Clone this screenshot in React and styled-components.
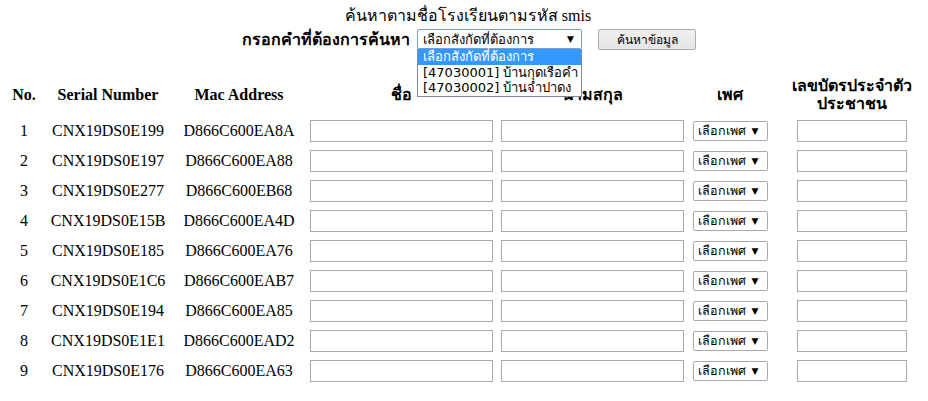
import React from 'react';
import styled, { createGlobalStyle } from 'styled-components';

const GlobalStyle = createGlobalStyle`
  body {
    margin: 0;
    background: #ffffff;
    color: #000000;
    font-family: "Liberation Serif", "Times New Roman", serif;
    overflow: hidden;
  }
`;

const Page = styled.div`
  width: 928px;
  padding-top: 6px;
`;

const Title = styled.div`
  text-align: center;
  font-size: 16px;
  line-height: 20px;
  padding-left: 8px;
`;

const SearchRow = styled.div`
  display: flex;
  align-items: center;
  justify-content: center;
  height: 24px;
  margin-top: 1px;
  padding-left: 10px;
`;

const SearchLabel = styled.span`
  font-weight: bold;
  font-size: 16px;
  margin-right: 7px;
`;

const SelectWrap = styled.div`
  position: relative;
  margin-right: 16px;
`;

const SelectBox = styled.div`
  box-sizing: border-box;
  width: ${p => p.$width}px;
  height: ${p => p.$height}px;
  border: 1px solid ${p => (p.$focused ? '#7a9ccf' : '#a9a9a9')};
  border-radius: 2px;
  background: #fff;
  display: flex;
  align-items: center;
  justify-content: space-between;
  padding: 0 7px 0 5px;
  font-family: Tahoma, "DejaVu Sans", "Noto Sans", sans-serif;
  font-size: 13px;
  color: #000;
`;

const Arrow = styled.span`
  font-size: 9px;
  line-height: 1;
`;

const OptionList = styled.div`
  position: absolute;
  left: 0;
  top: 20px;
  width: 165px;
  box-sizing: border-box;
  border: 1px solid #7f8a9a;
  border-top: none;
  background: #fff;
  font-family: Tahoma, "DejaVu Sans", "Noto Sans", sans-serif;
  font-size: 13px;
  z-index: 2;
`;

const Option = styled.div`
  height: 15.5px;
  line-height: 15.5px;
  padding-left: 5px;
  white-space: nowrap;
  background: ${p => (p.$active ? '#3399ff' : 'transparent')};
  color: ${p => (p.$active ? '#ffffff' : '#000000')};
`;

const Button = styled.button`
  box-sizing: border-box;
  width: 98px;
  height: 21px;
  border: 1px solid #acacac;
  border-radius: 2px;
  background: linear-gradient(#f0f0f0, #e5e5e5);
  font-family: Tahoma, "DejaVu Sans", "Noto Sans", sans-serif;
  font-size: 12px;
  color: #000;
  padding: 0;
`;

const Table = styled.table`
  margin: 23px 0 0 4px;
  border-collapse: collapse;
  border-spacing: 0;
  table-layout: fixed;
  width: 908px;
`;

const Th = styled.th`
  width: ${p => p.$w}px;
  height: 42px;
  padding: 0 0 0 ${p => p.$pl || 0}px;
  font-size: 16px;
  line-height: 18px;
  font-weight: bold;
  text-align: center;
  vertical-align: middle;
  white-space: nowrap;
`;

const Td = styled.td`
  height: 30px;
  padding: 0 0 0 ${p => p.$pl || 0}px;
  font-size: 16px;
  text-align: center;
  vertical-align: middle;
`;

const TextInput = styled.input`
  box-sizing: border-box;
  width: ${p => p.$width}px;
  height: 22px;
  border: 1px solid #a9a9a9;
  padding: 0 2px;
  background: #fff;
  display: block;
  margin: 0 auto;
`;

const GenderSelect = styled(SelectBox)`
  margin: 0 auto;
  padding: 0 8px 0 4px;
  font-size: 12.5px;
`;

const rows = [
  ['CNX19DS0E199', 'D866C600EA8A'],
  ['CNX19DS0E197', 'D866C600EA88'],
  ['CNX19DS0E277', 'D866C600EB68'],
  ['CNX19DS0E15B', 'D866C600EA4D'],
  ['CNX19DS0E185', 'D866C600EA76'],
  ['CNX19DS0E1C6', 'D866C600EAB7'],
  ['CNX19DS0E194', 'D866C600EA85'],
  ['CNX19DS0E1E1', 'D866C600EAD2'],
  ['CNX19DS0E176', 'D866C600EA63'],
];

export default function App() {
  return (
    <Page>
      <GlobalStyle />
      <Title>ค้นหาตามชื่อโรงเรียนตามรหัส smis</Title>
      <SearchRow>
        <SearchLabel>กรอกคำที่ต้องการค้นหา</SearchLabel>
        <SelectWrap>
          <SelectBox $width={165} $height={20} $focused>
            <span>เลือกสังกัดที่ต้องการ</span>
            <Arrow>▼</Arrow>
          </SelectBox>
          <OptionList>
            <Option $active>เลือกสังกัดที่ต้องการ</Option>
            <Option>[47030001] บ้านกุดเรือคำ</Option>
            <Option>[47030002] บ้านจำปาดง</Option>
          </OptionList>
        </SelectWrap>
        <Button>ค้นหาข้อมูล</Button>
      </SearchRow>

      <Table>
        <thead>
          <tr>
            <Th $w={40}>No.</Th>
            <Th $w={128}>Serial Number</Th>
            <Th $w={134}>Mac Address</Th>
            <Th $w={191}>ชื่อ</Th>
            <Th $w={191}>นามสกุล</Th>
            <Th $w={84}>เพศ</Th>
            <Th $w={120} $pl={20}>
              เลขบัตรประจำตัว
              <br />
              ประชาชน
            </Th>
          </tr>
        </thead>
        <tbody>
          {rows.map(([serial, mac], i) => (
            <tr key={serial}>
              <Td>{i + 1}</Td>
              <Td>{serial}</Td>
              <Td>{mac}</Td>
              <Td>
                <TextInput $width={183} />
              </Td>
              <Td>
                <TextInput $width={183} />
              </Td>
              <Td>
                <GenderSelect $width={75} $height={20}>
                  <span>เลือกเพศ</span>
                  <Arrow>▼</Arrow>
                </GenderSelect>
              </Td>
              <Td $pl={20}>
                <TextInput $width={110} />
              </Td>
            </tr>
          ))}
        </tbody>
      </Table>
    </Page>
  );
}
